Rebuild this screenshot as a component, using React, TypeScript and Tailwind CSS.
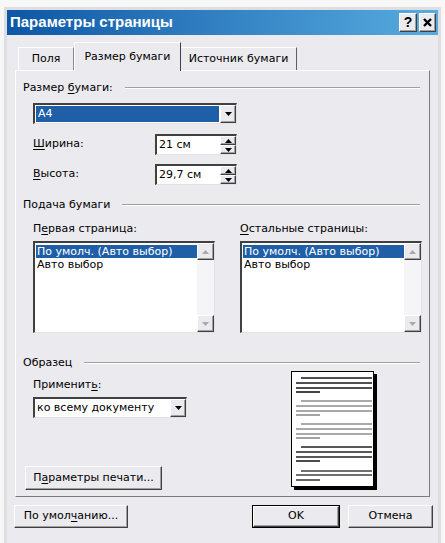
import React from "react";

const raised =
  "bg-[#ebeaef] border border-t-white border-l-white border-r-[#404040] border-b-[#404040] shadow-[inset_-1px_-1px_0_#a0a0a0]";
const sunken =
  "bg-white border-t-2 border-l-2 border-r border-b border-t-[#404040] border-l-[#404040] border-r-[#e2e2e2] border-b-[#e2e2e2]";

function U({ c }: { c: string }) {
  return <span className="underline underline-offset-2">{c}</span>;
}

function Down({ color = "#000" }: { color?: string }) {
  return (
    <svg width="7" height="4" viewBox="0 0 7 4">
      <path d="M0 0h7L3.5 4z" fill={color} />
    </svg>
  );
}

function Up({ color = "#000" }: { color?: string }) {
  return (
    <svg width="7" height="4" viewBox="0 0 7 4">
      <path d="M0 4h7L3.5 0z" fill={color} />
    </svg>
  );
}

function DropBtn() {
  return (
    <div className={`w-[16px] h-full flex items-center justify-center ${raised}`}>
      <Down />
    </div>
  );
}

function Header({ label, mt }: { label: React.ReactNode; mt: string }) {
  return (
    <div className={`flex items-center h-[16px] ${mt}`}>
      <span className="pl-[7px] pr-[12px]">{label}</span>
      <div className="flex-1 mr-[9px] h-[2px] border-t border-t-[#a0a0a0] border-b border-b-white" />
    </div>
  );
}

function SpinField({ value }: { value: string }) {
  return (
    <div className={`flex h-[21px] w-[82px] ${sunken}`}>
      <div className="flex-1 flex items-center pl-[2px]">{value}</div>
      <div className="w-[16px] flex flex-col">
        <div className={`flex-1 flex items-center justify-center ${raised}`}>
          <Up />
        </div>
        <div className={`flex-1 flex items-center justify-center ${raised}`}>
          <Down />
        </div>
      </div>
    </div>
  );
}

function ListBox() {
  return (
    <div className={`flex w-[182px] h-[92px] ${sunken}`}>
      <div className="flex-1 pt-[2px] pl-[1px]">
        <div className="h-[13px] leading-[13px] bg-[#1f5fa8] text-white pl-[1px]">
          По умолч. (Авто выбор)
        </div>
        <div className="h-[13px] leading-[13px] pl-[1px]">Авто выбор</div>
      </div>
      <div className="w-[17px] flex flex-col bg-[#f5f5f7]">
        <div className={`h-[17px] flex items-center justify-center ${raised}`}>
          <Up color="#a8a8a8" />
        </div>
        <div className="flex-1" />
        <div className={`h-[17px] flex items-center justify-center ${raised}`}>
          <Down color="#a8a8a8" />
        </div>
      </div>
    </div>
  );
}

function PagePreview() {
  const groups = [
    { y: 6, c: "#151515", n: 4 },
    { y: 29, c: "#8c8c8c", n: 4 },
    { y: 52, c: "#8c8c8c", n: 4 },
    { y: 75, c: "#202020", n: 4 },
    { y: 99, c: "#404040", n: 3 },
  ];
  return (
    <div className="w-[83px] h-[116px] bg-white border border-black shadow-[3px_3px_0_#000]">
      <svg width="81" height="114" viewBox="0 0 81 114">
        {groups.map((g, i) => {
          const lines =
            g.n === 4
              ? [
                  [9, 80, g.y],
                  [4, 80, g.y + 5],
                  [4, 80, g.y + 10],
                  [4, 28, g.y + 14],
                ]
              : [
                  [9, 80, g.y],
                  [4, 80, g.y + 4],
                  [4, 28, g.y + 9],
                ];
          return lines.map(([x1, x2, y], j) => (
            <line key={`${i}-${j}`} x1={x1} x2={x2} y1={y} y2={y} stroke={g.c} strokeWidth="1.6" />
          ));
        })}
      </svg>
    </div>
  );
}

export default function App() {
  return (
    <div className="w-[445px] h-[543px] bg-[#f7f7f7] pt-[7px] pl-[4px] overflow-hidden font-['DejaVu_Sans',sans-serif] text-[11px] text-black">
      <div className="w-[437px] h-[540px] bg-[#ebeaef] border-[3px] border-[#dedde2] border-b-0 flex flex-col">
        {/* title */}
        <div className="h-[25px] flex items-center bg-linear-to-r from-[#0c57a6] to-[#57acdf] pl-[3px] pr-[2px]">
          <span className="flex-1 text-white text-[15px] font-bold font-['Liberation_Sans',sans-serif]">
            Параметры страницы
          </span>
          <div className={`w-[18px] h-[19px] flex items-center justify-center font-bold text-[14px] font-['Liberation_Sans',sans-serif] ${raised}`}>
            ?
          </div>
          <div className={`ml-[2px] w-[17px] h-[19px] flex items-center justify-center ${raised}`}>
            <svg width="9" height="9" viewBox="0 0 9 9">
              <path d="M1 1L8 8M8 1L1 8" stroke="#000" strokeWidth="2.4" />
            </svg>
          </div>
        </div>

        <div className="px-[8px] pt-[7px]">
          {/* tabs */}
          <div className="flex items-end h-[28px] pl-[3px]">
            <div className="w-[56px] h-[23px] flex items-center justify-center border border-b-0 border-t-white border-l-white border-r-[#8a8a8a]">
              Поля
            </div>
            <div className="relative z-10 w-[107px] h-[29px] -mb-px bg-[#ebeaef] flex items-center justify-center border border-b-0 border-t-white border-l-white border-r-[#404040]">
              Размер бумаги
            </div>
            <div className="w-[116px] h-[23px] flex items-center justify-center border border-b-0 border-l-0 border-t-white border-r-[#606060]">
              Источник бумаги
            </div>
          </div>

          {/* panel */}
          <div className="h-[427px] flex flex-col border border-t-white border-l-white border-r-[#7c7c7c] border-b-[#7c7c7c]">
            <Header
              mt="mt-[9px]"
              label={
                <>
                  Размер <U c="б" />
                  умаги:
                </>
              }
            />
            <div className={`ml-[17px] mt-[7px] flex h-[21px] w-[204px] ${sunken}`}>
              <div className="flex-1 m-[1px] bg-[#1f5fa8] text-white flex items-center pl-[2px]">A4</div>
              <DropBtn />
            </div>
            <div className="ml-[17px] mt-[10px] flex items-center">
              <span className="w-[122px]">
                <U c="Ш" />
                ирина:
              </span>
              <SpinField value="21 см" />
            </div>
            <div className="ml-[17px] mt-[9px] flex items-center">
              <span className="w-[122px]">
                <U c="В" />
                ысота:
              </span>
              <SpinField value="29,7 см" />
            </div>

            <Header mt="mt-[12px]" label="Подача бумаги" />
            <div className="ml-[17px] mt-[8px] flex h-[16px] items-center">
              <span className="w-[207px]">
                П<U c="е" />
                рвая страница:
              </span>
              <span>
                <U c="О" />
                стальные страницы:
              </span>
            </div>
            <div className="ml-[17px] mt-[4px] flex gap-[25px]">
              <ListBox />
              <ListBox />
            </div>

            <Header mt="mt-[22px]" label="Образец" />
            <div className="flex">
              <div className="w-[275px] flex flex-col">
                <div className="ml-[17px] mt-[6px] h-[16px] flex items-center">
                  Применит<U c="ь" />:
                </div>
                <div className={`ml-[17px] mt-[4px] flex h-[21px] w-[154px] ${sunken}`}>
                  <div className="flex-1 flex items-center pl-[2px]">ко всему документу</div>
                  <DropBtn />
                </div>
                <div className={`ml-[9px] mt-[48px] w-[137px] h-[24px] flex items-center justify-center ${raised}`}>
                  П<U c="а" />
                  раметры печати...
                </div>
              </div>
              <div>
                <PagePreview />
              </div>
            </div>
          </div>
        </div>

        {/* bottom buttons */}
        <div className="mt-[8px] flex pl-[7px] pr-[5px]">
          <div className={`w-[114px] h-[23px] flex items-center justify-center ${raised}`}>
            По умол<U c="ч" />
            анию...
          </div>
          <div className="flex-1" />
          <div className="w-[88px] h-[23px] border border-black">
            <div className={`w-full h-full flex items-center justify-center ${raised}`}>OK</div>
          </div>
          <div className={`ml-[8px] w-[85px] h-[23px] flex items-center justify-center ${raised}`}>Отмена</div>
        </div>
      </div>
    </div>
  );
}
